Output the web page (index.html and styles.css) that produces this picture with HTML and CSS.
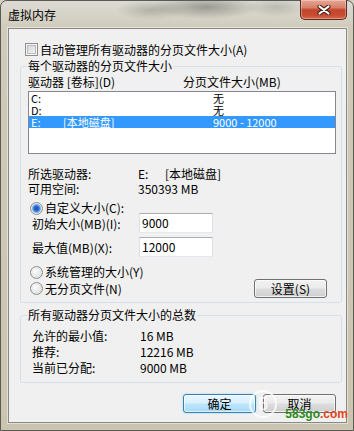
FILE: index.html
```html
<!DOCTYPE html>
<html lang="zh-CN">
<head>
  <meta charset="UTF-8" />
  <meta name="viewport" content="width=device-width, initial-scale=1.0" />
  <title>虚拟内存</title>
  <link rel="stylesheet" href="styles.css">
</head>
<body>
  <div class="window">
    <div class="titlebar">
      <span class="title">虚拟内存</span>
      <button class="close-btn" aria-label="关闭">
        <svg width="14" height="10" viewBox="0 0 14 10">
          <path d="M2.5 1.5 L11.5 8.5 M11.5 1.5 L2.5 8.5" stroke="#4a1e14" stroke-width="4.2" stroke-linecap="round" fill="none"/>
          <path d="M2.5 1.5 L11.5 8.5 M11.5 1.5 L2.5 8.5" stroke="#fff" stroke-width="2.2" stroke-linecap="round" fill="none"/>
        </svg>
      </button>
    </div>

    <div class="client">
      <div class="check-row"><span class="checkbox"></span>自动管理所有驱动器的分页文件大小(A)</div>

      <fieldset class="group drives">
        <legend>每个驱动器的分页文件大小</legend>
        <div class="cols">
          <span class="col-drive">驱动器 [卷标](D)</span>
          <span>分页文件大小(MB)</span>
        </div>
        <div class="list">
          <div class="list-row"><span class="drive">C:</span><span class="vol"></span><span>无</span></div>
          <div class="list-row"><span class="drive">D:</span><span class="vol"></span><span>无</span></div>
          <div class="list-row selected"><span class="drive">E:</span><span class="vol">[本地磁盘]</span><span>9000 - 12000</span></div>
        </div>

        <div class="info">
          <div class="pair"><span class="key">所选驱动器:</span><span class="drive-name">E:</span><span>[本地磁盘]</span></div>
          <div class="pair"><span class="key">可用空间:</span><span>350393 MB</span></div>
        </div>

        <div class="radio-row custom"><span class="radio checked"></span>自定义大小(C):</div>
        <div class="size-row"><span class="size-label">初始大小(MB)(I):</span><span class="textbox">9000</span></div>
        <div class="size-row second"><span class="size-label">最大值(MB)(X):</span><span class="textbox">12000</span></div>
        <div class="radio-row system"><span class="radio"></span>系统管理的大小(Y)</div>
        <div class="last-row">
          <div class="radio-line"><span class="radio"></span>无分页文件(N)</div>
          <button class="btn set-btn">设置(S)</button>
        </div>
      </fieldset>

      <fieldset class="group totals-group">
        <legend>所有驱动器分页文件大小的总数</legend>
        <div class="totals">
          <div class="pair"><span class="total-key">允许的最小值:</span><span>16 MB</span></div>
          <div class="pair"><span class="total-key">推荐:</span><span>12216 MB</span></div>
          <div class="pair"><span class="total-key">当前已分配:</span><span>9000 MB</span></div>
        </div>
      </fieldset>

      <div class="dialog-buttons">
        <button class="btn default-btn">确定</button>
        <button class="btn">取消</button>
      </div>
    </div>

    <div class="watermark">
      <span class="wm-logo">5</span>
      <span class="wm-text"><span class="wm-green">583go</span><span class="wm-red">.com</span></span>
    </div>
  </div>
</body>
</html>
```

FILE: styles.css
```css
html, body {
  margin: 0;
  height: 100%;
  background-color: #d3cfc3;
  font-family: "Noto Sans CJK SC", sans-serif;
  font-size: 12px;
  color: #000;
  overflow: hidden;
}

.window {
  position: relative;
  box-sizing: border-box;
  width: 354px;
  height: 431px;
  border: 1px solid #5c5a52;
  border-radius: 7px 7px 0 0;
  padding: 0 6px 7px 7px;
  background:
    radial-gradient(ellipse 55px 12px at 205px 6px, rgba(80, 80, 72, 0.45), transparent),
    radial-gradient(ellipse 35px 10px at 150px 9px, rgba(110, 110, 100, 0.35), transparent),
    radial-gradient(ellipse 30px 10px at 275px 6px, rgba(120, 120, 110, 0.3), transparent),
    linear-gradient(#dcdbd4, #cfcab9 30px, #cac4b0);
}

.titlebar {
  display: flex;
  justify-content: space-between;
  align-items: flex-start;
  height: 27px;
}

.title {
  padding-top: 7px;
  line-height: 14px;
}

.close-btn {
  width: 47px;
  height: 20px;
  margin-top: -1px;
  padding: 0;
  border: 1px solid #5a2a20;
  border-top: none;
  border-radius: 0 0 5px 5px;
  background: linear-gradient(#e6a795 0%, #d6806a 40%, #c3452c 52%, #c84c32 80%, #dc6a4a 100%);
  box-shadow: inset 0 0 0 1px rgba(255, 255, 255, 0.3);
  display: flex;
  justify-content: center;
  align-items: center;
}

.client {
  box-sizing: border-box;
  height: 395px;
  background-color: #f0f0f0;
  border: 1px solid #898a86;
  box-shadow: 0 0 0 1px rgba(255, 255, 255, 0.45);
}

.check-row {
  display: flex;
  align-items: center;
  gap: 2px;
  height: 13px;
  margin: 14px 0 0 16px;
}

.checkbox {
  width: 13px;
  height: 13px;
  box-sizing: border-box;
  border: 1px solid #8e8f8f;
  background: linear-gradient(135deg, #cfd2d6, #f7f7f7);
  box-shadow: inset 0 0 0 1px #f4f4f4, inset 0 0 0 2px #b8bcc2;
}

.group {
  margin: 4px 4px 0 11px;
  padding: 0 0 4px 0;
  border: 1px solid #d5dfe5;
  border-radius: 3px;
  min-width: 0;
}

.group legend {
  margin-left: 6px;
  padding: 0 1px;
  line-height: 12px;
}

.cols {
  display: flex;
  margin: 4px 0 0 7px;
  line-height: 12px;
}

.col-drive {
  width: 155px;
}

.list {
  box-sizing: border-box;
  width: 308px;
  height: 63px;
  margin: 3px 0 0 7px;
  border: 1px solid #828790;
  background-color: #fff;
}

.list-row {
  display: flex;
  height: 12px;
  font-size: 11px;
  line-height: 12px;
  padding-left: 2px;
}

.list-row.selected {
  background-color: #3399ff;
  color: #fff;
}

.drive {
  width: 32px;
}

.vol {
  width: 150px;
}

.info {
  margin: 12px 0 0 7px;
  line-height: 15px;
}

.pair {
  display: flex;
}

.key {
  width: 110px;
}

.drive-name {
  width: 27px;
}

.radio-row {
  display: flex;
  align-items: center;
  gap: 2px;
  height: 12px;
  line-height: 12px;
  margin: 6px 0 0 9px;
}

.radio-row.system {
  margin-top: 9px;
}

.radio {
  width: 13px;
  height: 13px;
  box-sizing: border-box;
  border: 1px solid #8e8f8f;
  border-radius: 50%;
  background: radial-gradient(circle at 40% 40%, #fdfdfd, #d2d4d6);
  flex-shrink: 0;
}

.radio.checked {
  background: radial-gradient(circle, #1b4fa6 0, #2f6fd0 2.5px, #7fb2ea 4px, #d6e6f7 5px, #eef1f4 6px);
}

.size-row {
  display: flex;
  align-items: center;
  height: 20px;
  margin: -1px 0 0 11px;
}

.size-row.second {
  margin-top: 4px;
}

.size-label {
  width: 107px;
}

.textbox {
  box-sizing: border-box;
  width: 74px;
  height: 20px;
  padding-left: 2px;
  line-height: 18px;
  background-color: #fff;
  border: 1px solid #dbdfe6;
  border-top-color: #abadb3;
  border-bottom-color: #e3e9ef;
}

.last-row {
  display: flex;
  align-items: center;
  height: 19px;
  margin: 1px 0 0 9px;
}

.radio-line {
  display: flex;
  align-items: center;
  gap: 2px;
  width: 224px;
}

.btn {
  box-sizing: border-box;
  width: 73px;
  height: 19px;
  padding: 0;
  font-family: "Noto Sans CJK SC", sans-serif;
  font-size: 12px;
  color: #000;
  border: 1px solid #707070;
  border-radius: 3px;
  background: linear-gradient(#f2f2f2 0%, #ebebeb 48%, #dddddd 52%, #cfcfcf 100%);
  box-shadow: inset 0 0 0 1px rgba(255, 255, 255, 0.7);
}

.default-btn {
  border-color: #3c7fb1;
  background: linear-gradient(#eaf6fd 0%, #d9f0fc 48%, #bee6fd 52%, #a7d9f5 100%);
  box-shadow: inset 0 0 0 1px rgba(255, 255, 255, 0.6), 0 0 2px #7fd2f0;
}

.totals-group {
  margin-top: 6px;
  padding-bottom: 6px;
}

.totals {
  margin: 7px 0 0 11px;
  line-height: 16px;
}

.total-key {
  width: 108px;
}

.dialog-buttons {
  display: flex;
  justify-content: flex-end;
  gap: 7px;
  margin-top: 11px;
  padding-right: 10px;
}

.watermark {
  position: absolute;
  right: 5px;
  bottom: 10px;
  display: flex;
  align-items: flex-end;
  gap: 8px;
  pointer-events: none;
}

.wm-logo {
  width: 28px;
  height: 28px;
  box-sizing: border-box;
  border: 2px solid rgba(255, 255, 255, 0.75);
  border-radius: 50%;
  color: rgba(255, 255, 255, 0.85);
  font-family: "Liberation Sans", sans-serif;
  font-size: 18px;
  line-height: 24px;
  text-align: center;
  margin-bottom: 2px;
}

.wm-text {
  font-family: "Liberation Sans", sans-serif;
  font-size: 12px;
  font-weight: bold;
  line-height: 12px;
}

.wm-green {
  color: #2e8a1e;
}

.wm-red {
  color: #e0461c;
}
```
